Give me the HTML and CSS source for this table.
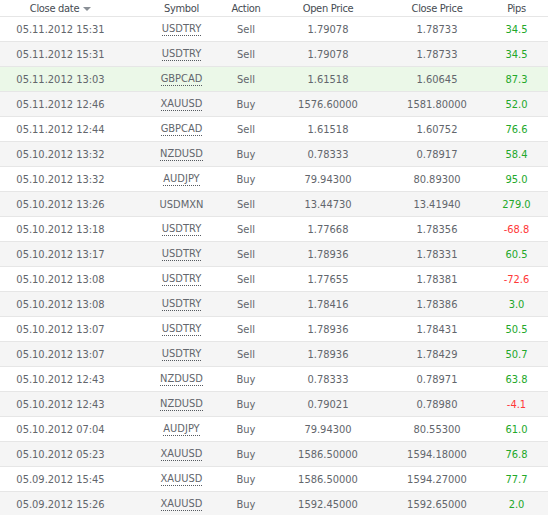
FILE: index.html
```html
<!DOCTYPE html>
<html>
<head>
<meta charset="utf-8">
<link rel="stylesheet" href="styles.css">
</head>
<body>
<div class="table">
  <div class="row head">
    <div class="c1">Close date <span class="sort"></span></div>
    <div class="c2">Symbol</div>
    <div class="c3">Action</div>
    <div class="c4">Open Price</div>
    <div class="c5">Close Price</div>
    <div class="c6">Pips</div>
  </div>
  <div class="row"><div class="c1">05.11.2012 15:31</div><div class="c2"><span class="sym">USDTRY</span></div><div class="c3">Sell</div><div class="c4">1.79078</div><div class="c5">1.78733</div><div class="c6 up">34.5</div></div>
  <div class="row alt"><div class="c1">05.11.2012 15:31</div><div class="c2"><span class="sym">USDTRY</span></div><div class="c3">Sell</div><div class="c4">1.79078</div><div class="c5">1.78733</div><div class="c6 up">34.5</div></div>
  <div class="row hl"><div class="c1">05.11.2012 13:03</div><div class="c2"><span class="sym">GBPCAD</span></div><div class="c3">Sell</div><div class="c4">1.61518</div><div class="c5">1.60645</div><div class="c6 up">87.3</div></div>
  <div class="row alt"><div class="c1">05.11.2012 12:46</div><div class="c2"><span class="sym">XAUUSD</span></div><div class="c3">Buy</div><div class="c4">1576.60000</div><div class="c5">1581.80000</div><div class="c6 up">52.0</div></div>
  <div class="row"><div class="c1">05.11.2012 12:44</div><div class="c2"><span class="sym">GBPCAD</span></div><div class="c3">Sell</div><div class="c4">1.61518</div><div class="c5">1.60752</div><div class="c6 up">76.6</div></div>
  <div class="row alt"><div class="c1">05.10.2012 13:32</div><div class="c2"><span class="sym">NZDUSD</span></div><div class="c3">Buy</div><div class="c4">0.78333</div><div class="c5">0.78917</div><div class="c6 up">58.4</div></div>
  <div class="row"><div class="c1">05.10.2012 13:32</div><div class="c2"><span class="sym">AUDJPY</span></div><div class="c3">Buy</div><div class="c4">79.94300</div><div class="c5">80.89300</div><div class="c6 up">95.0</div></div>
  <div class="row alt"><div class="c1">05.10.2012 13:26</div><div class="c2">USDMXN</div><div class="c3">Sell</div><div class="c4">13.44730</div><div class="c5">13.41940</div><div class="c6 up">279.0</div></div>
  <div class="row"><div class="c1">05.10.2012 13:18</div><div class="c2"><span class="sym">USDTRY</span></div><div class="c3">Sell</div><div class="c4">1.77668</div><div class="c5">1.78356</div><div class="c6 down">-68.8</div></div>
  <div class="row alt"><div class="c1">05.10.2012 13:17</div><div class="c2"><span class="sym">USDTRY</span></div><div class="c3">Sell</div><div class="c4">1.78936</div><div class="c5">1.78331</div><div class="c6 up">60.5</div></div>
  <div class="row"><div class="c1">05.10.2012 13:08</div><div class="c2"><span class="sym">USDTRY</span></div><div class="c3">Sell</div><div class="c4">1.77655</div><div class="c5">1.78381</div><div class="c6 down">-72.6</div></div>
  <div class="row alt"><div class="c1">05.10.2012 13:08</div><div class="c2"><span class="sym">USDTRY</span></div><div class="c3">Sell</div><div class="c4">1.78416</div><div class="c5">1.78386</div><div class="c6 up">3.0</div></div>
  <div class="row"><div class="c1">05.10.2012 13:07</div><div class="c2"><span class="sym">USDTRY</span></div><div class="c3">Sell</div><div class="c4">1.78936</div><div class="c5">1.78431</div><div class="c6 up">50.5</div></div>
  <div class="row alt"><div class="c1">05.10.2012 13:07</div><div class="c2"><span class="sym">USDTRY</span></div><div class="c3">Sell</div><div class="c4">1.78936</div><div class="c5">1.78429</div><div class="c6 up">50.7</div></div>
  <div class="row"><div class="c1">05.10.2012 12:43</div><div class="c2"><span class="sym">NZDUSD</span></div><div class="c3">Buy</div><div class="c4">0.78333</div><div class="c5">0.78971</div><div class="c6 up">63.8</div></div>
  <div class="row alt"><div class="c1">05.10.2012 12:43</div><div class="c2"><span class="sym">NZDUSD</span></div><div class="c3">Buy</div><div class="c4">0.79021</div><div class="c5">0.78980</div><div class="c6 down">-4.1</div></div>
  <div class="row"><div class="c1">05.10.2012 07:04</div><div class="c2"><span class="sym">AUDJPY</span></div><div class="c3">Buy</div><div class="c4">79.94300</div><div class="c5">80.55300</div><div class="c6 up">61.0</div></div>
  <div class="row alt"><div class="c1">05.10.2012 05:23</div><div class="c2"><span class="sym">XAUUSD</span></div><div class="c3">Buy</div><div class="c4">1586.50000</div><div class="c5">1594.18000</div><div class="c6 up">76.8</div></div>
  <div class="row"><div class="c1">05.09.2012 15:45</div><div class="c2"><span class="sym">XAUUSD</span></div><div class="c3">Buy</div><div class="c4">1586.50000</div><div class="c5">1594.27000</div><div class="c6 up">77.7</div></div>
  <div class="row alt"><div class="c1">05.09.2012 15:26</div><div class="c2"><span class="sym">XAUUSD</span></div><div class="c3">Buy</div><div class="c4">1592.45000</div><div class="c5">1592.65000</div><div class="c6 up">2.0</div></div>
</div>
</body>
</html>
```
FILE: styles.css
```css
html, body {
  margin: 0;
  padding: 0;
  background: #ffffff;
}
body {
  font-family: "DejaVu Sans Condensed", "DejaVu Sans", sans-serif;
  font-size: 11px;
  color: #62666c;
}
.table {
  width: 548px;
}
.row {
  display: grid;
  grid-template-columns: 121px 93px 73px 95px 95px 71px;
  height: 24px;
  border-bottom: 1px solid #e6e6e6;
  background: #ffffff;
}
.row > div {
  display: flex;
  align-items: center;
  justify-content: center;
  box-sizing: border-box;
  white-space: nowrap;
}
.row.head {
  height: 16px;
  color: #464b52;
  letter-spacing: -0.3px;
}
.row.alt {
  background: #f5f5f5;
}
.row.hl {
  background: #ebf8e8;
}
.c2 { padding-left: 28px; }
.c3 { padding-right: 9px; }
.c4 { padding-right: 13px; }
.c5 { padding-left: 15px; }
.c6 { padding-left: 8px; }
.sym {
  border-bottom: 1px dotted #555a60;
  line-height: 12px;
  padding-top: 1px;
}
.up { color: #22a82a; }
.down { color: #ff3838; }
.sort {
  display: inline-block;
  width: 0;
  height: 0;
  margin-left: 4px;
  margin-top: 2px;
  border-left: 4px solid transparent;
  border-right: 4px solid transparent;
  border-top: 4px solid #8a8f96;
}
```
